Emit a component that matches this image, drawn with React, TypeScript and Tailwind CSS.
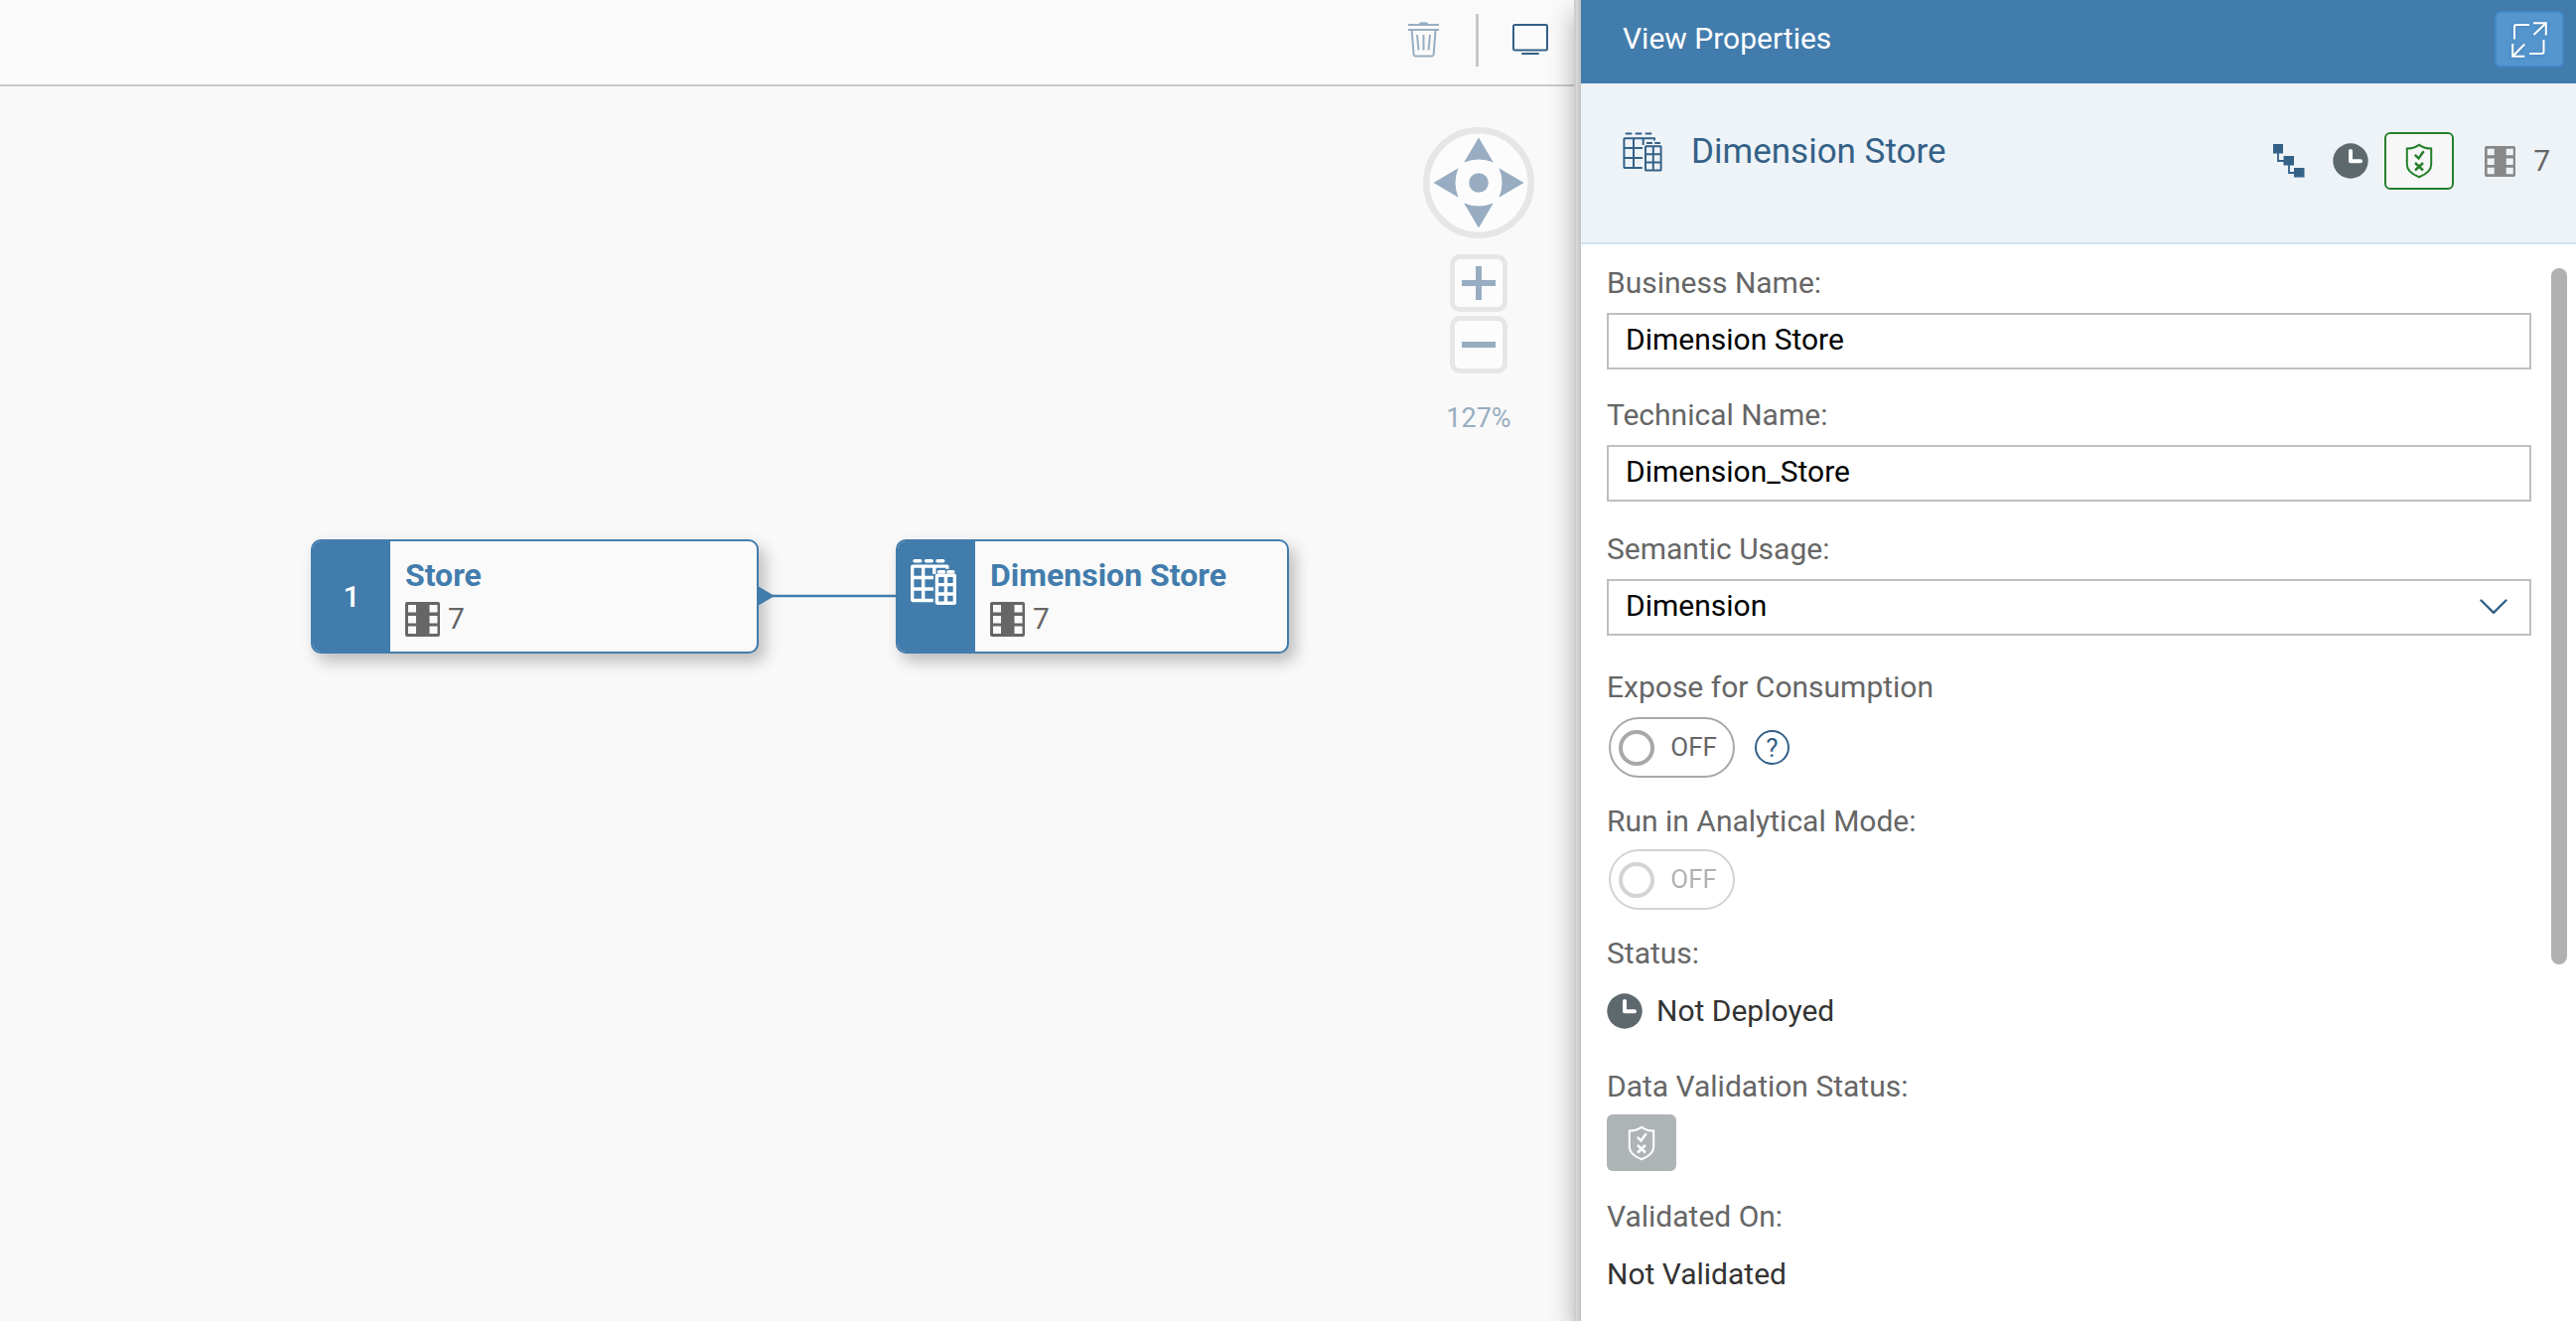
import React, { useState } from "react";

function TrashIcon() {
  return (
    <svg width="32" height="36" viewBox="0 0 32 36" fill="none" stroke="currentColor" strokeWidth="2">
      <path d="M10.5 2.5C11 .5 12.500 .2 15.500 .2s4.500 .3 5 2.300z" fill="currentColor" stroke="none" />
      <path d="M0 3h31M0 8h31" />
      <path d="M3.600 8.500l2 24.500q.2 1.600 1.600 1.600h16.800q1.400 0 1.600-1.600l2-24.500" />
      <path d="M9 13l1.500 15.500M15.500 13v15.500M22 13l-1.500 15.500" />
    </svg>
  );
}

function MonitorIcon() {
  return (
    <svg width="36" height="32" viewBox="0 0 36 32" fill="none" stroke="currentColor" strokeWidth="2">
      <rect x="1" y="1" width="34" height="25.500" rx="1.500" />
      <path d="M10 30h16" strokeLinecap="round" />
    </svg>
  );
}

function BuildingIcon({ size, weight }: { size: number; weight: number }) {
  return (
    <svg width={size} height={size} viewBox="0 0 40 40" fill="none" stroke="currentColor" strokeWidth={weight} strokeLinejoin="round">
      <path d="M3.500 1.500h5M13.500 1.500h5M23.500 1.500h5" strokeLinecap="round" />
      <path d="M32 8.500V6.200H2.200q-.8 0-.8.800v28.200q0 .8.8.800h17.600" />
      <path d="M11 6v30M1.400 16H20M1.400 26H20M20.700 6v7" />
      <path d="M24.800 11h4.400M33 11h4.200" strokeLinecap="round" />
      <rect x="23" y="14.200" width="15.600" height="24.300" rx=".6" />
      <path d="M30.800 14v24M23 22.300h15.600M23 30.500h15.600" />
    </svg>
  );
}

function ColumnsIcon({ size }: { size: number }) {
  return (
    <svg width={size} height={size} viewBox="0 0 35 35" fill="currentColor" fillRule="evenodd">
      <path d="M2 0h31q2 0 2 2v31q0 2-2 2H2q-2 0-2-2V2Q0 0 2 0zM3 3v7.500h8V3zM3 14v7.500h8V14zM3 24.500V32h8v-7.500zM24.500 3v7.500h8V3zM24.500 14v7.500h8V14zM24.500 24.500V32h8v-7.500z" />
    </svg>
  );
}

function LineageIcon() {
  return (
    <svg width="32" height="34" viewBox="0 0 32 34" fill="currentColor">
      <path d="M5 8v9h8M16 20v9h8" fill="none" stroke="currentColor" strokeWidth="1.800" />
      <rect width="10" height="9.500" />
      <rect x="10.500" y="12" width="10.500" height="9.500" />
      <rect x="21" y="24" width="10.500" height="9.500" />
    </svg>
  );
}

function ClockIcon() {
  return (
    <svg width="36" height="36" viewBox="0 0 36 36">
      <circle cx="18" cy="18" r="17.700" fill="#5e696e" />
      <path d="M18 8v10.200h10" fill="none" stroke="#fff" strokeWidth="4" strokeLinecap="round" strokeLinejoin="round" />
    </svg>
  );
}

function ShieldIcon() {
  return (
    <svg width="28" height="36" viewBox="0 0 28 36" fill="none" stroke="currentColor" strokeWidth="2">
      <path d="M14 1.800Q8.500 5.500 1.800 5.600v15.800c0 6.200 5.600 10.200 12.200 12.800 6.600-2.600 12.200-6.600 12.200-12.800V5.600Q19.500 5.500 14 1.800z" />
      <path d="M9.800 11.800l3.700 3.700 5.200-7.300M10 20l8 7.500M18 20l-8 7.500" strokeWidth="2.400" />
    </svg>
  );
}

function ExpandIcon() {
  return (
    <svg width="36" height="36" viewBox="0 0 36 36" fill="none" stroke="currentColor" strokeWidth="2" className="drop-shadow-sm">
      <path d="M3 17.500V5q0-2 2-2h13" />
      <path d="M22 1.200h12.800v12.300M34.500 1.500L22.500 13" />
      <path d="M32.500 18v12q0 2-2 2H18" />
      <path d="M1.200 22v12.800h12M1.500 34.500l11.700-12" />
    </svg>
  );
}

function PanPad() {
  return (
    <svg width="112" height="112" viewBox="0 0 112 112" role="img" aria-label="Pan">
      <circle cx="56" cy="56" r="52.700" fill="#fcfcfc" stroke="#e6e6e6" strokeWidth="6.600" />
      <g fill="#98adc1">
        <circle cx="56" cy="56" r="9.800" />
        <path d="M56 10.500L70.800 35.500Q56 29.500 41.200 35.500z" />
        <path d="M56 101.500L70.800 76.500Q56 82.500 41.200 76.500z" />
        <path d="M10.500 56L35.500 41.200Q29.500 56 35.500 70.800z" />
        <path d="M101.500 56L76.500 41.200Q82.500 56 76.500 70.800z" />
      </g>
    </svg>
  );
}

function ZoomButton({ label, path }: { label: string; path: string }) {
  return (
    <button type="button" aria-label={label} className="flex size-[58px] items-center justify-center rounded-[10px] border-[5px] border-[#e6e6e6] bg-[#fcfcfc] text-[#98adc1]">
      <svg width="34" height="34" viewBox="0 0 34 34" stroke="currentColor" strokeWidth="6">
        <path d={path} />
      </svg>
    </button>
  );
}

function DiagramNode({ badge, title, count, className }: { badge: React.ReactNode; title: string; count: number; className: string }) {
  return (
    <div className={`absolute flex h-[115px] overflow-hidden rounded-[10px] border-2 border-[#427cac] bg-[#fafafa] shadow-[6px_8px_16px_rgba(0,0,0,0.25)] ${className}`}>
      <div className="flex w-[78px] shrink-0 justify-center bg-[#427cac] text-white">{badge}</div>
      <div className="flex flex-col gap-1 pl-[15px] pt-[14px]">
        <span className="text-[32px] font-bold leading-[40px] text-[#427cac]">{title}</span>
        <span className="flex items-center gap-2 text-[30px] leading-[40px] text-[#666]">
          <ColumnsIcon size={35} />
          {count}
        </span>
      </div>
    </div>
  );
}

function Toggle({ labelId, disabled = false }: { labelId: string; disabled?: boolean }) {
  const [on, setOn] = useState(false);
  return (
    <button
      type="button"
      role="switch"
      aria-checked={on}
      aria-labelledby={labelId}
      disabled={disabled}
      onClick={() => setOn(!on)}
      className="ml-[2px] flex h-[61px] w-[127px] items-center justify-between rounded-full border-2 border-[#a8a8a8] bg-white pl-2 pr-4 text-[26px] text-[#666] disabled:opacity-50"
    >
      <span className="size-9 rounded-full border-4 border-[#a8a8a8]" />
      {on ? "ON" : "OFF"}
    </button>
  );
}

const labelClass = "block text-[30px] leading-[40px] text-[#666]";
const fieldClass = "mt-[10px] block h-[57px] w-full rounded-none border-2 border-[#bfbfbf] bg-white px-[17px] pb-1 text-[30px] text-black outline-none";

export default function App() {
  return (
    <div className="flex h-screen overflow-hidden bg-[#f9f9f9] font-['Roboto',sans-serif]">
      <main className="flex min-w-0 flex-1 flex-col">
        <div className="flex h-[87px] shrink-0 items-start justify-end border-b-2 border-[#c8caca] bg-[#fafafa] pr-[26px]">
          <button type="button" aria-label="Delete" className="mt-[22px] text-[#98adc1]">
            <TrashIcon />
          </button>
          <span className="ml-9 mt-[14px] h-[53px] w-[3px] bg-[#c8c8c8]" />
          <button type="button" aria-label="Preview" className="ml-[34px] mt-6 text-[#346187]">
            <MonitorIcon />
          </button>
        </div>

        <div className="relative flex-1">
          <DiagramNode
            className="left-[313px] top-[456px] w-[451px]"
            badge={<span className="self-center text-[30px] font-medium leading-[40px]">1</span>}
            title="Store"
            count={7}
          />
          <svg width="139" height="20" viewBox="0 0 139 20" className="absolute left-[763px] top-[503px] text-[#427cac]">
            <path d="M0 0l17 10L0 20z" fill="currentColor" />
            <path d="M10 10h129" stroke="currentColor" strokeWidth="2.500" />
          </svg>
          <DiagramNode
            className="left-[902px] top-[456px] w-[396px]"
            badge={<span className="pr-[6px] pt-[18px]"><BuildingIcon size={46} weight={3} /></span>}
            title="Dimension Store"
            count={7}
          />

          <div className="absolute right-10 top-[41px] flex w-[112px] flex-col items-center">
            <PanPad />
            <div className="mt-4 flex flex-col gap-1">
              <ZoomButton label="Zoom in" path="M0 17h34M17 0v34" />
              <ZoomButton label="Zoom out" path="M0 17h34" />
            </div>
            <span className="mt-[25px] text-[27px] leading-[40px] text-[#98adc1]">127%</span>
          </div>
        </div>
      </main>

      <aside className="relative flex w-[1009px] shrink-0 border-l-2 border-[#cdcdcd] shadow-[0_12px_24px_rgba(0,0,0,0.3)]">
        <div className="w-[5px] shrink-0 bg-linear-to-r from-[#dadada] to-[#c2c2c2]" />
        <div className="flex min-w-0 flex-1 flex-col bg-white">
          <header className="flex h-[84px] shrink-0 items-start justify-between bg-[#427cac] pl-[42px] pr-3 pt-[11px] text-white">
            <h1 className="mt-2 text-[30px] leading-[40px]">View Properties</h1>
            <button type="button" aria-label="Expand" className="flex h-[57px] w-[70px] items-center justify-center rounded-md border-2 border-[#4188c8] bg-[#5596cf]">
              <ExpandIcon />
            </button>
          </header>

          <div className="flex h-[162px] shrink-0 items-start justify-between border-b-2 border-[#d1e0ee] bg-[#eef3f8] pl-[42px] pr-[26px] pt-[49px]">
            <div className="flex items-center gap-[29px] text-[#346187]">
              <BuildingIcon size={40} weight={2} />
              <h2 className="text-[35px] leading-[40px]">Dimension Store</h2>
            </div>
            <div className="flex items-center">
              <button type="button" aria-label="Lineage" className="text-[#346187]">
                <LineageIcon />
              </button>
              <span className="ml-7"><ClockIcon /></span>
              <button type="button" aria-label="Validate" className="ml-4 flex h-[58px] w-[70px] items-center justify-center rounded-md border-2 border-[#24802a] bg-[#f7f7f7] text-[#24802a]">
                <ShieldIcon />
              </button>
              <span className="ml-[31px] flex items-center gap-[18px] text-[30px] leading-[40px] text-[#666]">
                <span className="text-[#888]"><ColumnsIcon size={31} /></span>
                7
              </span>
            </div>
          </div>

          <div className="relative min-h-0 flex-1 overflow-hidden pl-[26px] pr-[45px] pt-[19px]">
            <label htmlFor="business" className={labelClass}>Business Name:</label>
            <input id="business" defaultValue="Dimension Store" className={fieldClass} />

            <label htmlFor="technical" className={`mt-[26px] ${labelClass}`}>Technical Name:</label>
            <input id="technical" defaultValue="Dimension_Store" className={fieldClass} />

            <label htmlFor="usage" className={`mt-7 ${labelClass}`}>Semantic Usage:</label>
            <div className="relative">
              <select id="usage" defaultValue="Dimension" className={`appearance-none ${fieldClass}`}>
                <option>Dimension</option>
                <option>Fact</option>
              </select>
              <svg width="28" height="16" viewBox="0 0 28 16" fill="none" className="pointer-events-none absolute right-6 top-5 text-[#346187]" stroke="currentColor" strokeWidth="2.400" strokeLinecap="round" strokeLinejoin="round">
                <path d="M1.500 1.500L14 13.800 26.500 1.500" />
              </svg>
            </div>

            <div id="expose" className={`mt-8 ${labelClass}`}>Expose for Consumption</div>
            <div className="mt-[10px] flex items-center gap-5">
              <Toggle labelId="expose" />
              <button type="button" aria-label="Help" className="flex size-[35px] items-center justify-center rounded-full border-2 border-[#346187] text-[26px] leading-none text-[#346187]">?</button>
            </div>

            <div id="analytical" className={`mt-6 ${labelClass}`}>Run in Analytical Mode:</div>
            <div className="mt-2">
              <Toggle labelId="analytical" disabled />
            </div>

            <div className={`mt-6 ${labelClass}`}>Status:</div>
            <div className="mt-[18px] flex items-center gap-[14px] text-[30px] leading-[40px] text-[#333]">
              <ClockIcon />
              Not Deployed
            </div>

            <div className={`mt-9 ${labelClass}`}>Data Validation Status:</div>
            <button type="button" aria-label="Data validation" disabled className="mt-2 flex h-[57px] w-[70px] items-center justify-center rounded-md bg-[#aeb4b6] text-white">
              <ShieldIcon />
            </button>

            <div className={`mt-[26px] ${labelClass}`}>Validated On:</div>
            <div className="mt-[18px] text-[30px] leading-[40px] text-[#333]">Not Validated</div>

            <div className="absolute right-[9px] top-6 h-[701px] w-4 rounded-full bg-[#b1b1b1]" />
          </div>
        </div>
      </aside>
    </div>
  );
}
